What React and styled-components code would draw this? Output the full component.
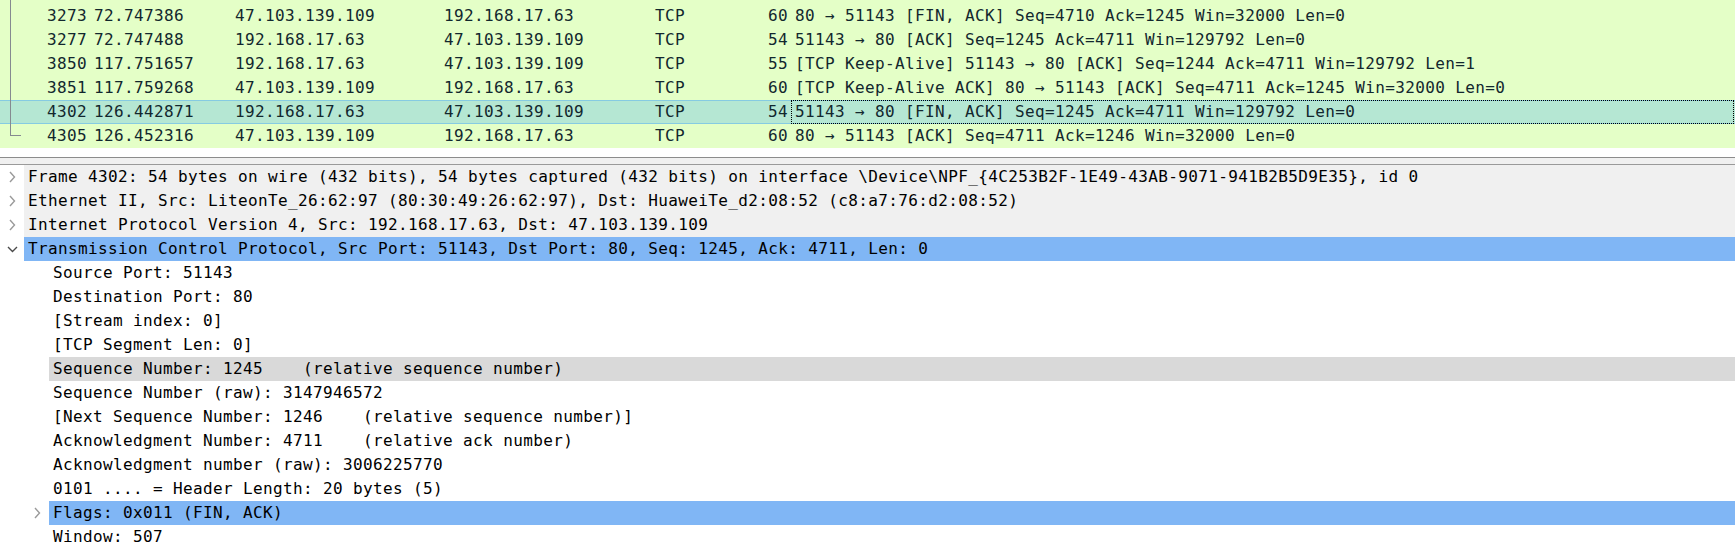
import React from 'react';
import styled, {createGlobalStyle} from "styled-components";

const GlobalStyle = createGlobalStyle`
  html, body {
    margin: 0;
    padding: 0;
    background: #ffffff;
  }
  body {
    width: 1735px;
    height: 545px;
    overflow: hidden;
    font-family: "DejaVu Sans Mono", "Liberation Mono", monospace;
  }
`

const Window = styled.div`
  width: 1735px;
  height: 545px;
  display: flex;
  flex-direction: column;
  overflow: hidden;
  font-family: "DejaVu Sans Mono", "Liberation Mono", monospace;
  font-size: 16px;
  letter-spacing: 0.37px;
`

const PacketList = styled.div`
  height: 157px;
  overflow: hidden;
  background: #ffffff;
  flex-shrink: 0;
`

const PacketScroll = styled.div`
  margin-top: -20px;
`

const PacketRow = styled.div`
  display: grid;
  grid-template-columns: 90px 141px 209px 211px 90px 50px 1fr;
  height: 24px;
  align-items: center;
  color: #12272e;
  background: ${p => p.$selected ? '#b5e7d3' : '#e4ffc7'};
  box-shadow: ${p => p.$selected ? 'inset 0 1px #86cbe2, inset 0 -1px #86cbe2' : 'none'};
`

const Cell = styled.div`
  position: relative;
  height: 24px;
  line-height: 24px;
  white-space: pre;
  overflow: hidden;
  text-align: ${p => p.$right ? 'right' : 'left'};
  padding: ${p => p.$right ? '0 3px 0 0' : '0 0 0 4px'};
  box-sizing: border-box;
`

const InfoCell = styled(Cell)`
  margin-right: 1px;
  outline: ${p => p.$focus ? '1px dotted #000000' : 'none'};
  outline-offset: -1px;
`

const Related = styled.span`
  position: absolute;
  left: 10px;
  top: 0;
  width: ${p => p.$last ? '10px' : '0'};
  height: ${p => p.$last ? '11px' : '24px'};
  border-left: 1px solid #858a90;
  border-bottom: ${p => p.$last ? '1px solid #858a90' : 'none'};
`

const Splitter = styled.div`
  height: 6px;
  flex-shrink: 0;
  background: #f0f0f0;
  border-top: 1px solid #8c8c8c;
  border-bottom: 1px solid #9a9a9a;
`

const Details = styled.div`
  flex: 1;
  background: #ffffff;
  overflow: hidden;
  color: #000000;
`

const TreeRow = styled.div`
  display: flex;
  height: 24px;
  align-items: stretch;
`

const Branch = styled.div`
  width: ${p => 24 + p.$level * 25}px;
  flex-shrink: 0;
  display: flex;
  justify-content: flex-end;
`

const ArrowBox = styled.div`
  width: 24px;
  display: flex;
  align-items: center;
  justify-content: center;
`

const tones = {
  top: '#f0f0f0',
  selected: '#80b6f5',
  hover: '#d9d9d9',
  plain: 'transparent',
}

const Label = styled.div`
  flex: 1;
  padding-left: 4px;
  line-height: 24px;
  white-space: pre;
  overflow: hidden;
  background: ${p => tones[p.$tone]};
`

const Chevron = ({open}) => open ? (
  <svg width="11" height="7" viewBox="0 0 11 7">
    <path d="M1 1 L5.5 5.5 L10 1" fill="none" stroke="#4a4a4a" strokeWidth="1.4"/>
  </svg>
) : (
  <svg width="7" height="12" viewBox="0 0 7 12">
    <path d="M1 1 L5.5 6 L1 11" fill="none" stroke="#9a9a9a" strokeWidth="1.4"/>
  </svg>
)

const packets = [
  {no: '3272', time: '72.747301', src: '192.168.17.63', dst: '47.103.139.109', len: '55', info: '[TCP Keep-Alive] 51143 → 80 [ACK] Seq=1243 Ack=4710 Win=129792 Len=1'},
  {no: '3273', time: '72.747386', src: '47.103.139.109', dst: '192.168.17.63', len: '60', info: '80 → 51143 [FIN, ACK] Seq=4710 Ack=1245 Win=32000 Len=0'},
  {no: '3277', time: '72.747488', src: '192.168.17.63', dst: '47.103.139.109', len: '54', info: '51143 → 80 [ACK] Seq=1245 Ack=4711 Win=129792 Len=0'},
  {no: '3850', time: '117.751657', src: '192.168.17.63', dst: '47.103.139.109', len: '55', info: '[TCP Keep-Alive] 51143 → 80 [ACK] Seq=1244 Ack=4711 Win=129792 Len=1'},
  {no: '3851', time: '117.759268', src: '47.103.139.109', dst: '192.168.17.63', len: '60', info: '[TCP Keep-Alive ACK] 80 → 51143 [ACK] Seq=4711 Ack=1245 Win=32000 Len=0'},
  {no: '4302', time: '126.442871', src: '192.168.17.63', dst: '47.103.139.109', len: '54', info: '51143 → 80 [FIN, ACK] Seq=1245 Ack=4711 Win=129792 Len=0', selected: true},
  {no: '4305', time: '126.452316', src: '47.103.139.109', dst: '192.168.17.63', len: '60', info: '80 → 51143 [ACK] Seq=4711 Ack=1246 Win=32000 Len=0', last: true},
]

const tree = [
  {level: 0, arrow: 'closed', tone: 'top', text: 'Frame 4302: 54 bytes on wire (432 bits), 54 bytes captured (432 bits) on interface \\Device\\NPF_{4C253B2F-1E49-43AB-9071-941B2B5D9E35}, id 0'},
  {level: 0, arrow: 'closed', tone: 'top', text: 'Ethernet II, Src: LiteonTe_26:62:97 (80:30:49:26:62:97), Dst: HuaweiTe_d2:08:52 (c8:a7:76:d2:08:52)'},
  {level: 0, arrow: 'closed', tone: 'top', text: 'Internet Protocol Version 4, Src: 192.168.17.63, Dst: 47.103.139.109'},
  {level: 0, arrow: 'open', tone: 'selected', text: 'Transmission Control Protocol, Src Port: 51143, Dst Port: 80, Seq: 1245, Ack: 4711, Len: 0'},
  {level: 1, tone: 'plain', text: 'Source Port: 51143'},
  {level: 1, tone: 'plain', text: 'Destination Port: 80'},
  {level: 1, tone: 'plain', text: '[Stream index: 0]'},
  {level: 1, tone: 'plain', text: '[TCP Segment Len: 0]'},
  {level: 1, tone: 'hover', text: 'Sequence Number: 1245    (relative sequence number)'},
  {level: 1, tone: 'plain', text: 'Sequence Number (raw): 3147946572'},
  {level: 1, tone: 'plain', text: '[Next Sequence Number: 1246    (relative sequence number)]'},
  {level: 1, tone: 'plain', text: 'Acknowledgment Number: 4711    (relative ack number)'},
  {level: 1, tone: 'plain', text: 'Acknowledgment number (raw): 3006225770'},
  {level: 1, tone: 'plain', text: '0101 .... = Header Length: 20 bytes (5)'},
  {level: 1, arrow: 'closed', tone: 'selected', text: 'Flags: 0x011 (FIN, ACK)'},
  {level: 1, tone: 'plain', text: 'Window: 507'},
]

const App = () => {
    return (
        <>
            <GlobalStyle/>
            <Window>
                <PacketList>
                    <PacketScroll>
                        {packets.map(p => (
                            <PacketRow key={p.no} $selected={p.selected}>
                                <Cell $right>
                                    <Related $last={p.last}/>
                                    {p.no}
                                </Cell>
                                <Cell>{p.time}</Cell>
                                <Cell>{p.src}</Cell>
                                <Cell>{p.dst}</Cell>
                                <Cell>TCP</Cell>
                                <Cell $right>{p.len}</Cell>
                                <InfoCell $focus={p.selected}>{p.info}</InfoCell>
                            </PacketRow>
                        ))}
                    </PacketScroll>
                </PacketList>
                <Splitter/>
                <Details>
                    {tree.map((t, i) => (
                        <TreeRow key={i}>
                            <Branch $level={t.level}>
                                <ArrowBox>
                                    {t.arrow && <Chevron open={t.arrow === 'open'}/>}
                                </ArrowBox>
                            </Branch>
                            <Label $tone={t.tone}>{t.text}</Label>
                        </TreeRow>
                    ))}
                </Details>
            </Window>
        </>
    );
};

export default App;
